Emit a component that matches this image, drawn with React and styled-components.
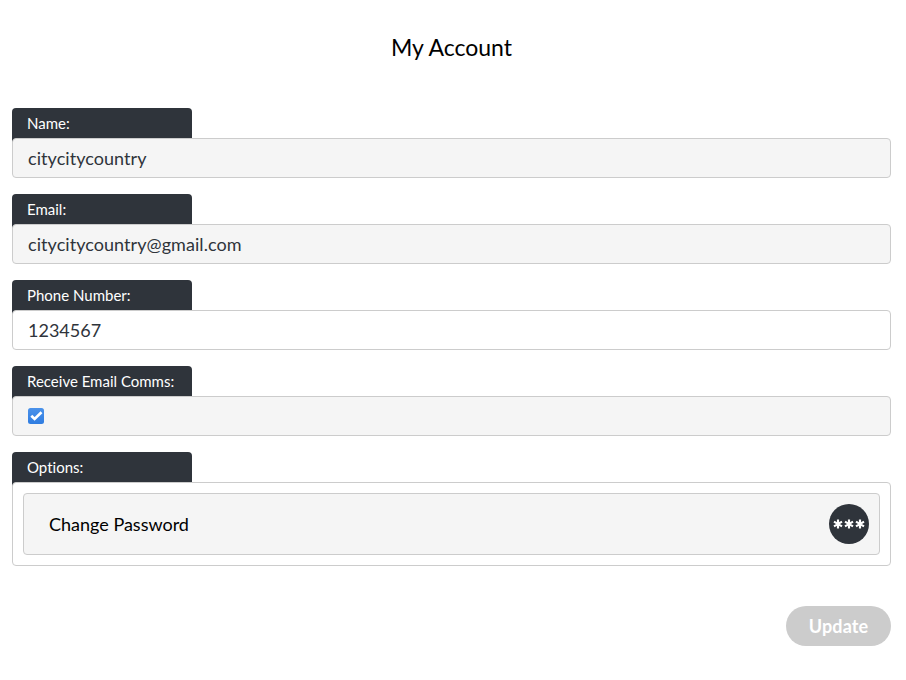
import React from "react";
import styled, { createGlobalStyle } from "styled-components";

const GlobalStyle = createGlobalStyle`
  *, *::before, *::after { box-sizing: border-box; }
  body {
    margin: 0;
    background: #fff;
    color: #000;
    font-family: Lato, sans-serif;
    font-variant-ligatures: none;
  }
`;

const Page = styled.main`
  width: 906px;
  height: 680px;
  padding: 32px 15px 0 12px;
`;

const Title = styled.h1`
  margin: 0 0 46px;
  font-size: 23px;
  line-height: 30px;
  font-weight: 400;
  text-align: center;
`;

const Field = styled.section`
  margin-bottom: 16px;
`;

const Tab = styled.div`
  width: 180px;
  height: 34px;
  margin-bottom: -4px;
  padding-left: 15px;
  border-radius: 4px 4px 0 0;
  background: #2f343b;
`;

const Label = styled.label`
  display: block;
  color: #fff;
  font-size: 15px;
  line-height: 31px;
`;

const Input = styled.input`
  position: relative;
  display: block;
  width: 100%;
  height: 40px;
  padding: 0 15px;
  border: 1px solid #ccc;
  border-radius: 4px;
  outline: none;
  background: ${(p) => (p.readOnly ? "#f5f5f5" : "#fff")};
  color: #2f343b;
  font-family: inherit;
  font-size: 18px;
  font-variant-ligatures: none;
  letter-spacing: ${(p) => (p.readOnly ? "0.06px" : "0")};
`;

const CheckRow = styled.div`
  position: relative;
  display: flex;
  align-items: center;
  height: 40px;
  padding-left: 15px;
  border: 1px solid #ccc;
  border-radius: 4px;
  background: #f5f5f5;
`;

const CheckIcon = styled.svg`
  width: 16px;
  height: 16px;
`;

const Options = styled.div`
  position: relative;
  padding: 10px;
  border: 1px solid #ccc;
  border-radius: 4px;
  background: #fff;
`;

const Option = styled.button`
  display: flex;
  align-items: center;
  justify-content: space-between;
  width: 100%;
  height: 62px;
  padding: 0 10px 0 25px;
  border: 1px solid #ccc;
  border-radius: 4px;
  background: #f5f5f5;
  color: #000;
  font-family: inherit;
  font-size: 18px;
`;

const PasswordIcon = styled.svg`
  width: 40px;
  height: 40px;
`;

const Actions = styled.div`
  display: flex;
  justify-content: flex-end;
  margin-top: 40px;
`;

const UpdateButton = styled.button`
  width: 105px;
  height: 40px;
  padding: 0;
  border: 0;
  border-radius: 20px;
  background: #ccc;
  color: #fff;
  font-family: inherit;
  font-size: 18px;
  font-weight: 700;
  letter-spacing: 0.15px;
`;

const Group = ({ label, children }) => (
  <Field>
    <Tab><Label>{label}</Label></Tab>
    {children}
  </Field>
);

export default function App() {
  return (
    <Page>
      <GlobalStyle />
      <Title>My Account</Title>
      <Group label="Name:"><Input readOnly value="citycitycountry" /></Group>
      <Group label="Email:"><Input readOnly value="citycitycountry@gmail.com" /></Group>
      <Group label="Phone Number:"><Input defaultValue="1234567" /></Group>
      <Group label="Receive Email Comms:">
        <CheckRow>
          <CheckIcon viewBox="0 0 16 16" role="checkbox" aria-checked="true">
            <defs>
              <linearGradient id="check-fill" x2="0" y2="1">
                <stop stopColor="#4b92ea" />
                <stop offset="1" stopColor="#2f7de1" />
              </linearGradient>
            </defs>
            <rect width="16" height="16" rx="2.5" fill="url(#check-fill)" />
            <path d="M3.3 7.7 6.6 10.9 13.5 4.3" fill="none" stroke="#fff" strokeWidth="2.7" />
          </CheckIcon>
        </CheckRow>
      </Group>
      <Group label="Options:">
        <Options>
          <Option type="button">
            Change Password
            <PasswordIcon viewBox="0 0 40 40" aria-hidden="true">
              <circle cx="20" cy="20" r="20" fill="#2f343b" />
              {[9, 20, 31].map((x) => (
                <path key={x} transform={`translate(${x} 20)`} d="M0-4.6V4.6M-4-2.4 4 2.4M-4 2.4 4-2.4" stroke="#fff" strokeWidth="2.15" />
              ))}
            </PasswordIcon>
          </Option>
        </Options>
      </Group>
      <Actions><UpdateButton type="button">Update</UpdateButton></Actions>
    </Page>
  );
}
